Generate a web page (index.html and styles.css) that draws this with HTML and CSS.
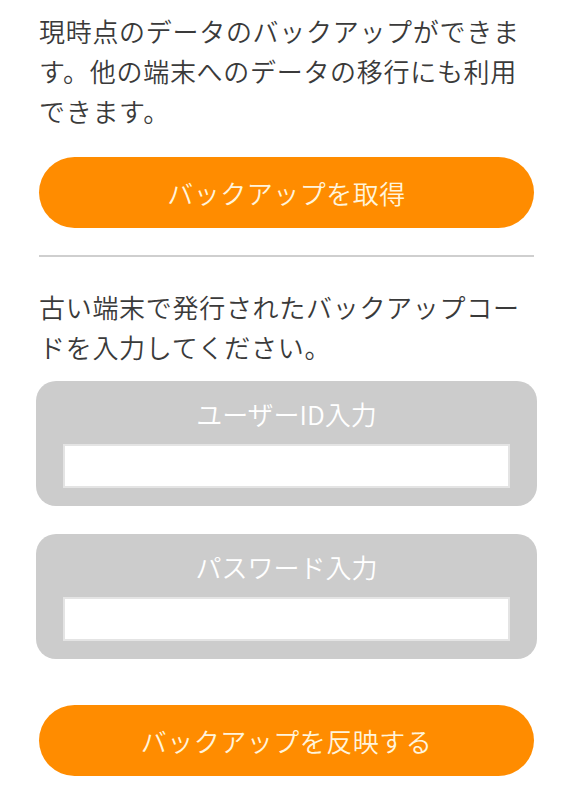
FILE: index.html
```html
<!DOCTYPE html>
<html lang="ja">
    <head>
        <meta charset="utf-8">
        <title>バックアップ</title>
        <link rel="stylesheet" href="styles.css">
    </head>
    <body>
    <div class="wrap">
        <p class="note first">現時点のデータのバックアップができます。他の端末へのデータの移行にも利用できます。</p>
        <button class="btn" type="button">バックアップを取得</button>
        <hr class="line">
        <p class="note second">古い端末で発行されたバックアップコードを入力してください。</p>
        <div class="field">
            <label class="label" for="uid">ユーザーID入力</label>
            <input class="import" id="uid" type="text">
        </div>
        <div class="field">
            <label class="label" for="pw">パスワード入力</label>
            <input class="import" id="pw" type="password">
        </div>
        <button class="btn last" type="button">バックアップを反映する</button>
    </div>
    </body>
</html>
```

FILE: styles.css
```css
body{
    margin:0;
    background-color:#fff;
    font-family:"Noto Sans CJK JP","Noto Sans",sans-serif;
    font-weight:350;
}
.wrap{
    padding:11px 39px 0;
}
.note{
    margin:0;
    font-size:26px;
    line-height:40px;
    letter-spacing:0.7px;
    color:#3a3a3a;
}
.btn{
    display:block;
    width:100%;
    height:71px;
    margin-top:26px;
    padding:0;
    border:none;
    border-radius:36px;
    background-color:#ff8c00;
    color:#fff4dc;
    font-family:inherit;
    font-weight:350;
    font-size:26px;
    letter-spacing:0.5px;
    line-height:71px;
    text-align:center;
}
.btn.last{margin-top:46px;}
.line{
    margin:27px 0 0;
    height:0;
    border:none;
    border-top:2px solid #cfcfcf;
}
.second{margin-top:30px;}
.field{
    margin:14px -3px 0;
    padding:13px 27px 18px;
    background-color:#cccccc;
    border-radius:20px;
    display:flex;
    flex-direction:column;
}
.field + .field{margin-top:28px;}
.label{
    font-size:26px;
    line-height:40px;
    color:#fff;
    text-align:center;
}
.import{
    box-sizing:border-box;
    height:44px;
    margin-top:10px;
    border:2px solid #e4e4e4;
    background-color:#fff;
    outline:none;
}
```
